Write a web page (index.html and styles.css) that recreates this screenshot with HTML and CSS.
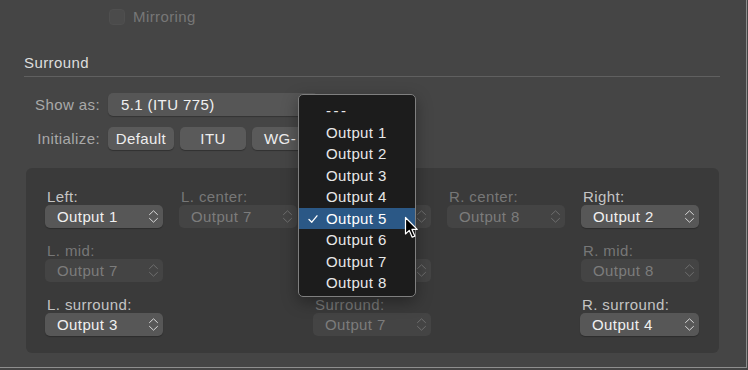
FILE: index.html
```html
<!DOCTYPE html>
<html>
<head>
<meta charset="utf-8">
<link rel="stylesheet" href="styles.css">
</head>
<body>
<div class="window">
  <div class="mirror-row">
    <span class="checkbox"></span>
    <span class="mirror-label">Mirroring</span>
  </div>
  <div class="section-title">Surround</div>
  <div class="separator"></div>
  <div class="form-row">
    <span class="form-label">Show as:</span>
    <div class="popup popup-wide"><span>5.1 (ITU 775)</span></div>
  </div>
  <div class="form-row form-row-buttons">
    <span class="form-label">Initialize:</span>
    <div class="buttons">
      <span class="btn">Default</span>
      <span class="btn">ITU</span>
      <span class="btn btn-clipped">WG-</span>
    </div>
  </div>
  <div class="panel">
    <div class="cell on"><div class="lbl">Left:</div><div class="popup"><span>Output 1</span><svg class="chev" viewBox="0 0 11 15"><path d="M1.5 5.6 L5.5 1.8 L9.5 5.6 M1.5 9.4 L5.5 13.2 L9.5 9.4"/></svg></div></div>
    <div class="cell off"><div class="lbl">L. center:</div><div class="popup"><span>Output 7</span><svg class="chev" viewBox="0 0 11 15"><path d="M1.5 5.6 L5.5 1.8 L9.5 5.6 M1.5 9.4 L5.5 13.2 L9.5 9.4"/></svg></div></div>
    <div class="cell off"><div class="lbl"></div><div class="popup"><span></span><svg class="chev" viewBox="0 0 11 15"><path d="M1.5 5.6 L5.5 1.8 L9.5 5.6 M1.5 9.4 L5.5 13.2 L9.5 9.4"/></svg></div></div>
    <div class="cell off"><div class="lbl">R. center:</div><div class="popup"><span>Output 8</span><svg class="chev" viewBox="0 0 11 15"><path d="M1.5 5.6 L5.5 1.8 L9.5 5.6 M1.5 9.4 L5.5 13.2 L9.5 9.4"/></svg></div></div>
    <div class="cell on"><div class="lbl">Right:</div><div class="popup"><span>Output 2</span><svg class="chev" viewBox="0 0 11 15"><path d="M1.5 5.6 L5.5 1.8 L9.5 5.6 M1.5 9.4 L5.5 13.2 L9.5 9.4"/></svg></div></div>

    <div class="cell off"><div class="lbl">L. mid:</div><div class="popup"><span>Output 7</span><svg class="chev" viewBox="0 0 11 15"><path d="M1.5 5.6 L5.5 1.8 L9.5 5.6 M1.5 9.4 L5.5 13.2 L9.5 9.4"/></svg></div></div>
    <div class="cell"></div>
    <div class="cell off"><div class="lbl"></div><div class="popup"><span></span><svg class="chev" viewBox="0 0 11 15"><path d="M1.5 5.6 L5.5 1.8 L9.5 5.6 M1.5 9.4 L5.5 13.2 L9.5 9.4"/></svg></div></div>
    <div class="cell"></div>
    <div class="cell off"><div class="lbl">R. mid:</div><div class="popup"><span>Output 8</span><svg class="chev" viewBox="0 0 11 15"><path d="M1.5 5.6 L5.5 1.8 L9.5 5.6 M1.5 9.4 L5.5 13.2 L9.5 9.4"/></svg></div></div>

    <div class="cell on"><div class="lbl">L. surround:</div><div class="popup"><span>Output 3</span><svg class="chev" viewBox="0 0 11 15"><path d="M1.5 5.6 L5.5 1.8 L9.5 5.6 M1.5 9.4 L5.5 13.2 L9.5 9.4"/></svg></div></div>
    <div class="cell"></div>
    <div class="cell off"><div class="lbl">Surround:</div><div class="popup"><span>Output 7</span><svg class="chev" viewBox="0 0 11 15"><path d="M1.5 5.6 L5.5 1.8 L9.5 5.6 M1.5 9.4 L5.5 13.2 L9.5 9.4"/></svg></div></div>
    <div class="cell"></div>
    <div class="cell on shift"><div class="lbl">R. surround:</div><div class="popup"><span>Output 4</span><svg class="chev" viewBox="0 0 11 15"><path d="M1.5 5.6 L5.5 1.8 L9.5 5.6 M1.5 9.4 L5.5 13.2 L9.5 9.4"/></svg></div></div>
  </div>

  <div class="menu">
    <div class="item dashes">---</div>
    <div class="item">Output 1</div>
    <div class="item">Output 2</div>
    <div class="item">Output 3</div>
    <div class="item">Output 4</div>
    <div class="item selected"><svg class="check" viewBox="0 0 10 10"><path d="M1 5.5 L3.8 8.2 L9 1.8"/></svg>Output 5</div>
    <div class="item">Output 6</div>
    <div class="item">Output 7</div>
    <div class="item">Output 8</div>
  </div>

  <svg class="cursor" viewBox="0 0 16 24" width="16" height="24"><path d="M1.5 1.5 L1.5 18 L5.3 14.4 L8.2 21.2 L10.8 20.1 L8 13.4 L13.2 13.4 Z"/></svg>
</div>
</body>
</html>
```

FILE: styles.css
```css
html, body {
  margin: 0;
  padding: 0;
  background: #454545;
}
body {
  font-family: "Liberation Sans", Arial, Helvetica, sans-serif;
  font-size: 15px;
  letter-spacing: 0.4px;
  line-height: 16px;
}
.window {
  position: relative;
  box-sizing: border-box;
  width: 747px;
  height: 368px;
  background: #454545;
  border-right: 1px solid #8e8e8e;
  border-bottom: 1px solid #8e8e8e;
  padding-top: 9px;
  overflow: hidden;
}
.mirror-row {
  display: flex;
  align-items: center;
  height: 16px;
  padding-left: 109px;
  gap: 8px;
}
.checkbox {
  width: 16px;
  height: 16px;
  border-radius: 4px;
  background: #4b4b4b;
  box-sizing: border-box;
  border: 1px solid #4f4f4f;
}
.mirror-label {
  color: #777777;
}
.section-title {
  margin-top: 30px;
  margin-left: 24px;
  color: #dddddd;
}
.separator {
  margin: 5px 26px 0 24px;
  height: 1px;
  background: #606060;
}
.form-row {
  display: flex;
  align-items: center;
  margin-top: 16px;
  gap: 8px;
}
.form-row-buttons {
  margin-top: 11px;
}
.form-label {
  width: 100px;
  text-align: right;
  color: #a9a9a9;
}
.popup {
  box-sizing: border-box;
  height: 23px;
  border-radius: 5px;
  display: flex;
  align-items: center;
  justify-content: space-between;
  padding: 0 4px 0 12px;
  background: #575757;
  color: #f0f0f0;
  box-shadow: 0 1px 1px rgba(0, 0, 0, 0.25);
}
.popup-wide {
  width: 210px;
  padding-left: 13px;
  background: #565656;
}
.buttons {
  display: flex;
  gap: 6px;
}
.btn {
  box-sizing: border-box;
  width: 66px;
  height: 23px;
  border-radius: 5px;
  background: #5a5a5a;
  color: #eeeeee;
  display: flex;
  align-items: center;
  justify-content: center;
  box-shadow: 0 1px 1px rgba(0, 0, 0, 0.3);
}
.btn-clipped {
  justify-content: flex-start;
  padding-left: 12px;
}
.panel {
  margin: 18px 0 0 26px;
  width: 693px;
  height: 185px;
  box-sizing: border-box;
  border-radius: 6px;
  background: #3a3a3a;
  padding: 21px 19px 0 19px;
  display: grid;
  grid-template-columns: repeat(5, 118px);
  column-gap: 16px;
  row-gap: 15px;
  grid-auto-rows: 39px;
}
.lbl {
  padding-left: 2px;
  height: 16px;
  white-space: nowrap;
}
.cell.on .lbl { color: #c4c4c4; }
.cell.off .lbl { color: #777777; }
.cell.off .popup {
  background: #444444;
  color: #7c7c7c;
  box-shadow: none;
}
.cell.shift { margin-left: -1px; }
.chev {
  width: 11px;
  height: 15px;
  fill: none;
  stroke: #d8d8d8;
  stroke-width: 1;
  stroke-linecap: round;
  stroke-linejoin: round;
}
.cell.off .chev { stroke: #6e6e6e; }
.menu {
  position: absolute;
  left: 298px;
  top: 94px;
  width: 118px;
  height: 203px;
  box-sizing: border-box;
  border: 1px solid #7f7f7f;
  border-radius: 5px;
  background: #1c1c1c;
  padding-top: 5px;
  box-shadow: 0 5px 16px rgba(0, 0, 0, 0.35);
}
.item {
  position: relative;
  height: 21.5px;
  line-height: 21.5px;
  padding-left: 27px;
  color: #e8e8e8;
  white-space: nowrap;
}
.item.dashes {
  letter-spacing: 2.5px;
}
.item.selected {
  background: #2b5886;
  color: #ffffff;
}
.check {
  position: absolute;
  left: 9px;
  top: 6px;
  width: 10px;
  height: 10px;
  fill: none;
  stroke: #ffffff;
  stroke-width: 1.3;
  stroke-linecap: round;
  stroke-linejoin: round;
}
.cursor {
  position: absolute;
  left: 404px;
  top: 216px;
  fill: #000000;
  stroke: #ffffff;
  stroke-width: 1.2;
  stroke-linejoin: round;
}
```
